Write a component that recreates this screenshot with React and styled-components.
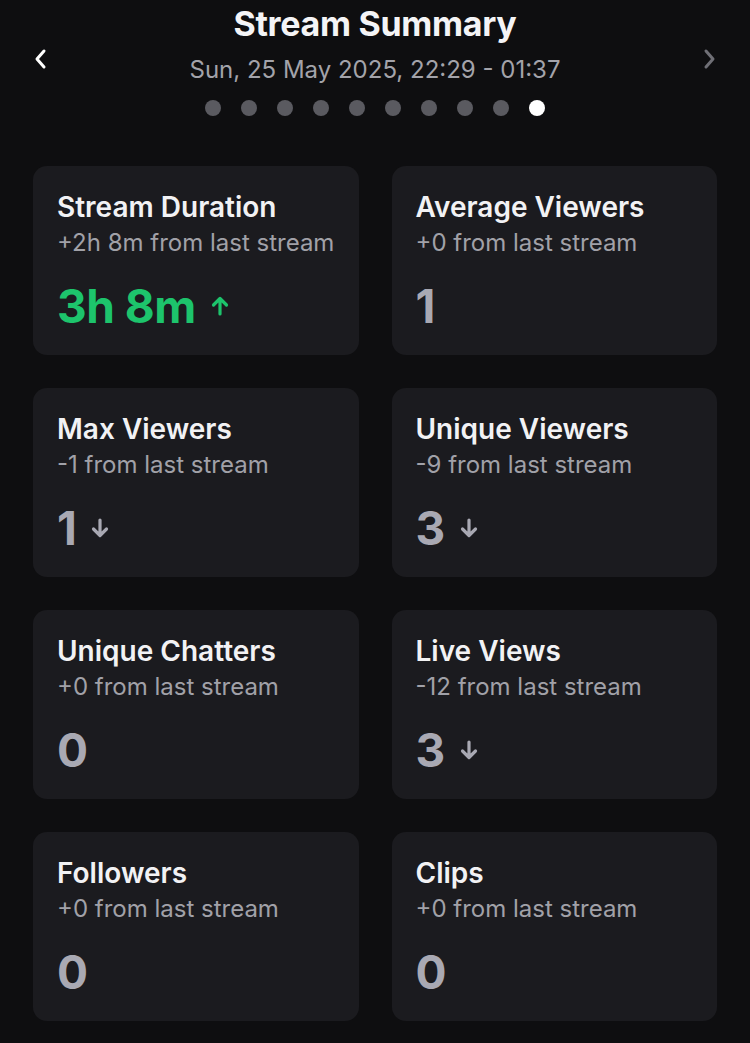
import React from "react";
import styled, { createGlobalStyle } from "styled-components";

const GlobalStyle = createGlobalStyle`
  html, body {
    margin: 0;
    padding: 0;
    background: #0e0e10;
  }
  body {
    font-family: Inter, "Noto Sans", sans-serif;
    -webkit-font-smoothing: antialiased;
  }
`;

const stats = [
  { title: "Stream Duration", diff: "+2h 8m from last stream", value: "3h 8m", trend: "up" },
  { title: "Average Viewers", diff: "+0 from last stream", value: "1" },
  { title: "Max Viewers", diff: "-1 from last stream", value: "1", trend: "down" },
  { title: "Unique Viewers", diff: "-9 from last stream", value: "3", trend: "down" },
  { title: "Unique Chatters", diff: "+0 from last stream", value: "0" },
  { title: "Live Views", diff: "-12 from last stream", value: "3", trend: "down" },
  { title: "Followers", diff: "+0 from last stream", value: "0" },
  { title: "Clips", diff: "+0 from last stream", value: "0" },
];

function Chevron({ dir }) {
  return (
    <svg width="16" height="22" viewBox="0 0 16 22" fill="none">
      <path
        d={dir === "left" ? "M11 3 L4 11 L11 19" : "M5 3 L12 11 L5 19"}
        stroke="currentColor"
        strokeWidth="3"
        strokeLinecap="round"
        strokeLinejoin="round"
      />
    </svg>
  );
}

function Arrow({ dir }) {
  return (
    <svg width="20" height="22" viewBox="0 0 20 22" fill="none">
      {dir === "up" ? (
        <path d="M10 19 V4 M3.5 10 L10 3.5 L16.5 10" stroke="currentColor" strokeWidth="3.2" strokeLinecap="round" strokeLinejoin="round" />
      ) : (
        <path d="M10 3 V18 M3.5 12 L10 18.5 L16.5 12" stroke="currentColor" strokeWidth="3.2" strokeLinecap="round" strokeLinejoin="round" />
      )}
    </svg>
  );
}

export default function App() {
  return (
    <Wrapper>
      <GlobalStyle />
      <Header>
        <NavButton $active>
          <Chevron dir="left" />
        </NavButton>
        <HeaderInfo>
          <Title>Stream Summary</Title>
          <DateText>Sun, 25 May 2025, 22:29 - 01:37</DateText>
          <Dots>
            {Array.from({ length: 10 }).map((_, i) => (
              <Dot key={i} $active={i === 9} />
            ))}
          </Dots>
        </HeaderInfo>
        <NavButton>
          <Chevron dir="right" />
        </NavButton>
      </Header>
      <Grid>
        {stats.map((s) => (
          <Card key={s.title}>
            <CardTitle>{s.title}</CardTitle>
            <CardDiff>{s.diff}</CardDiff>
            <ValueRow $up={s.trend === "up"}>
              <Value>{s.value}</Value>
              {s.trend && <Arrow dir={s.trend} />}
            </ValueRow>
          </Card>
        ))}
      </Grid>
    </Wrapper>
  );
}

const Wrapper = styled.div`
  width: 750px;
  min-height: 1043px;
  background: #0e0e10;
  box-sizing: border-box;
  padding: 0 33px;
`;
const Header = styled.div`
  display: flex;
  align-items: flex-start;
  justify-content: space-between;
`;
const NavButton = styled.div`
  color: ${(p) => (p.$active ? "#ffffff" : "#6f6f76")};
  margin-top: 48px;
  width: 16px;
  display: flex;
  justify-content: center;
`;
const HeaderInfo = styled.div`
  display: flex;
  flex-direction: column;
  align-items: center;
  padding-top: 4px;
`;
const Title = styled.h1`
  margin: 0;
  font-size: 34px;
  font-weight: 700;
  color: #f4f4f6;
  line-height: 40px;
  letter-spacing: -0.3px;
`;
const DateText = styled.div`
  margin-top: 11px;
  font-size: 24px;
  color: #a3a3aa;
  line-height: 30px;
`;
const Dots = styled.div`
  display: flex;
  gap: 20px;
  margin-top: 15px;
`;
const Dot = styled.span`
  width: 16px;
  height: 16px;
  border-radius: 50%;
  background: ${(p) => (p.$active ? "#ffffff" : "#5a5a60")};
`;
const Grid = styled.div`
  display: grid;
  grid-template-columns: 1fr 1fr;
  gap: 33px 33px;
  margin-top: 50px;
`;
const Card = styled.div`
  background: #1b1b1f;
  border-radius: 14px;
  height: 189px;
  box-sizing: border-box;
  padding: 24px 24px;
  display: flex;
  flex-direction: column;
`;
const CardTitle = styled.div`
  font-size: 28px;
  font-weight: 600;
  color: #f2f2f4;
  line-height: 34px;
`;
const CardDiff = styled.div`
  font-size: 24px;
  color: #a1a1a8;
  line-height: 30px;
  margin-top: 4px;
`;
const ValueRow = styled.div`
  display: flex;
  align-items: center;
  gap: 14px;
  margin-top: 22px;
  color: ${(p) => (p.$up ? "#1dc46c" : "#a9a9b3")};
`;
const Value = styled.div`
  font-size: 46px;
  font-weight: 700;
  line-height: 52px;
  letter-spacing: -0.5px;
`;
